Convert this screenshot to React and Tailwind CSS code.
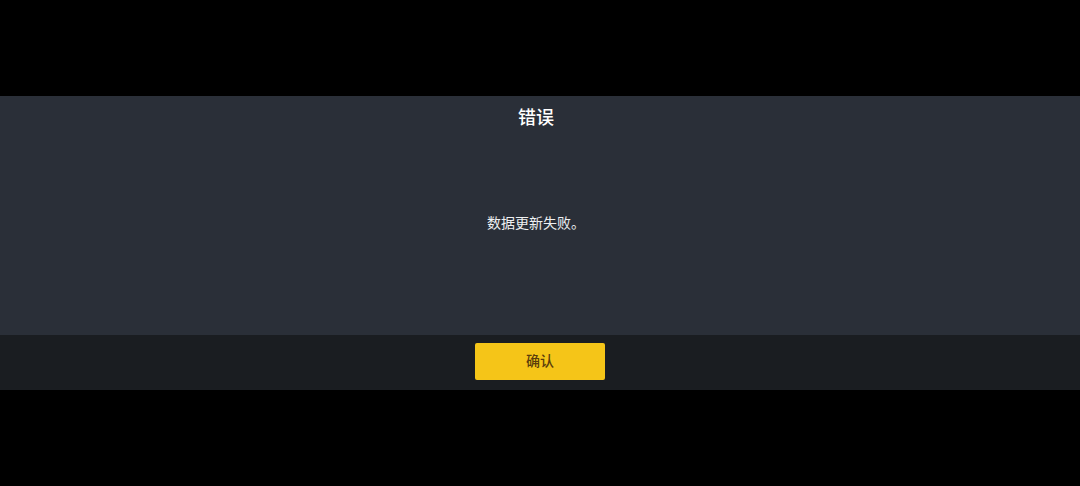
export default function App() {
  const font = { fontFamily: '"Noto Sans CJK SC", "Noto Sans", sans-serif' };
  return (
    <div className="w-[1080px] h-[486px] bg-black flex flex-col" style={font}>
      <div className="h-[96px] shrink-0" />
      <div className="h-[239px] shrink-0 bg-[#2a2f38] flex flex-col items-center">
        <div className="mt-[5px] ml-[-8px] text-[18px] leading-[30px] font-medium text-white">错误</div>
        <div className="mt-[81px] ml-[-8px] text-[14px] leading-[20px] text-[#eef0f2]">数据更新失败。</div>
      </div>
      <div className="h-[55px] shrink-0 bg-[#1a1d21] flex items-start justify-center pt-[8px]">
        <button className="w-[130px] h-[37px] pb-[3px] rounded-[2px] bg-[#f5c518] text-[#5b3d0c] text-[14px] leading-[20px] font-medium">确认</button>
      </div>
      <div className="flex-1" />
    </div>
  );
}
